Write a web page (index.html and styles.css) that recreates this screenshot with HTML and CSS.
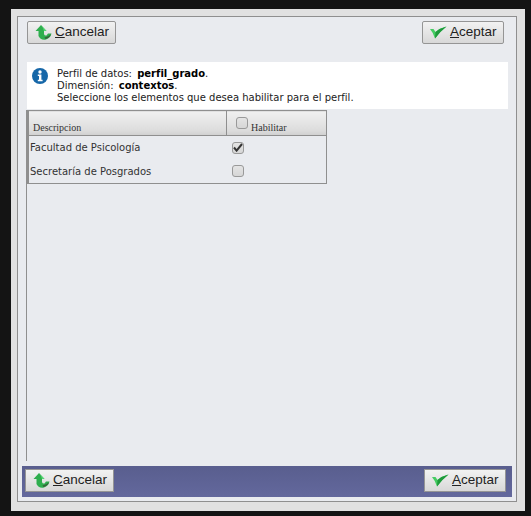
FILE: index.html
```html
<!DOCTYPE html>
<html lang="es">
<head>
    <meta charset="UTF-8">
    <title>Perfil de datos</title>
    <link rel="stylesheet" href="styles.css">
</head>
<body>
    <div class="outer">
        <div class="inner">
            <div class="toolbar">
                <button type="button" class="btn btn-cancel">
                    <svg class="ico" width="17" height="15" viewBox="0 0 17 15"><path d="M6 0 L11.5 6 L9 6 L9 9 Q9.5 11 11.5 10.5 L13 8.5 L16.5 8.5 Q15.5 13 11 14.5 Q5.5 15.5 3.5 11 L3.5 6 L0.5 6 Z" fill="#2fae4e"/><path d="M6 0 L11.5 6 L9 6 L8 3 Z" fill="#56d873"/><path d="M9.5 12.5 Q13.5 12 15.8 9.2 Q15 12.8 10.5 14 Z" fill="#37633c"/></svg>
                    <span><u>C</u>ancelar</span>
                </button>
                <button type="button" class="btn btn-ok">
                    <svg class="ico" width="17" height="13" viewBox="0 0 17 13"><path d="M0 3 L3.5 3 L5.5 6 Q10 2 16.5 0.5 Q10 5.5 5 12.5 Q3.5 7 0 3 Z" fill="#45cc62"/><path d="M5.5 6 Q10 2 16.5 0.5 Q10 5.5 5 12.5 Z" fill="#1f9a3c"/></svg>
                    <span><u>A</u>ceptar</span>
                </button>
            </div>
            <div class="info">
                <svg class="info-ico" width="16" height="16" viewBox="0 0 16 16"><circle cx="8" cy="8" r="8" fill="#1667a8"/><circle cx="8" cy="4" r="1.7" fill="#fff"/><path d="M5.8 6.6 H9.4 V11.8 H10.6 V13.2 H5.8 V11.8 H7 V8 H5.8 Z" fill="#fff"/></svg>
                <div class="info-text">
                    <div>Perfil de datos: <b>perfil_grado</b>.</div>
                    <div>Dimensión: <b>contextos</b>.</div>
                    <div>Seleccione los elementos que desea habilitar para el perfil.</div>
                </div>
            </div>
            <div class="content">
                <table class="grid">
                    <tr>
                        <th class="col-desc">Descripcion</th>
                        <th class="col-hab"><span class="check check-head"></span> Habilitar</th>
                    </tr>
                    <tr>
                        <td>Facultad de Psicología</td>
                        <td class="cell-check"><span class="check check-on">
                            <svg width="10" height="9" viewBox="0 0 10 9"><path d="M1 4.5 L3.6 7.6 L9 1" fill="none" stroke="#333" stroke-width="2"/></svg>
                        </span></td>
                    </tr>
                    <tr>
                        <td>Secretaría de Posgrados</td>
                        <td class="cell-check"><span class="check"></span></td>
                    </tr>
                </table>
            </div>
            <div class="footer">
                <button type="button" class="btn btn-cancel">
                    <svg class="ico" width="17" height="15" viewBox="0 0 17 15"><path d="M6 0 L11.5 6 L9 6 L9 9 Q9.5 11 11.5 10.5 L13 8.5 L16.5 8.5 Q15.5 13 11 14.5 Q5.5 15.5 3.5 11 L3.5 6 L0.5 6 Z" fill="#2fae4e"/><path d="M6 0 L11.5 6 L9 6 L8 3 Z" fill="#56d873"/><path d="M9.5 12.5 Q13.5 12 15.8 9.2 Q15 12.8 10.5 14 Z" fill="#37633c"/></svg>
                    <span><u>C</u>ancelar</span>
                </button>
                <button type="button" class="btn btn-ok">
                    <svg class="ico" width="17" height="13" viewBox="0 0 17 13"><path d="M0 3 L3.5 3 L5.5 6 Q10 2 16.5 0.5 Q10 5.5 5 12.5 Q3.5 7 0 3 Z" fill="#45cc62"/><path d="M5.5 6 Q10 2 16.5 0.5 Q10 5.5 5 12.5 Z" fill="#1f9a3c"/></svg>
                    <span><u>A</u>ceptar</span>
                </button>
            </div>
        </div>
    </div>
</body>
</html>
```

FILE: styles.css
```css
* {
    margin: 0;
    padding: 0;
    box-sizing: border-box;
}

html, body {
    height: 100%;
}

body {
    background-color: #141414;
    padding: 9px 6px 5px 11px;
    font-family: "Liberation Sans", Arial, sans-serif;
    overflow: hidden;
}

.outer {
    height: 100%;
    background-color: #e1e1e1;
    padding: 7px 8px 9px 6px;
}

.inner {
    height: 100%;
    display: flex;
    flex-direction: column;
    background-color: #e9ebef;
    border: 1px solid #8f8f8f;
    padding: 4px;
}

.toolbar {
    height: 41px;
    display: flex;
    justify-content: space-between;
    align-items: flex-start;
    padding: 0 8px 0 5px;
    flex: none;
}

.btn {
    flex: none;
    height: 23px;
    display: flex;
    align-items: center;
    gap: 3px;
    padding: 0 0 2px 7px;
    font-family: "Liberation Sans", Arial, sans-serif;
    font-size: 13.5px;
    color: #222;
    background: linear-gradient(#f2f2f2, #d8d8d8);
    border: 1px solid #959595;
    border-radius: 2px;
}

.btn-cancel {
    width: 89px;
}

.btn-ok {
    width: 82px;
}

.ico {
    flex: none;
    margin-top: 2px;
}

.info {
    flex: none;
    height: 47px;
    display: flex;
    gap: 9px;
    margin: 0 4px 0 5px;
    padding: 6px 0 0 5px;
    background-color: #fff;
    font-family: "DejaVu Sans", Verdana, sans-serif;
    font-size: 10px;
    line-height: 12px;
    color: #222;
}

.info-ico {
    flex: none;
}

.info-text b {
    margin-left: 2px;
    color: #000;
}

.content {
    flex: 1;
    margin: 1px 0 5px 4px;
    border-left: 1px solid #8f8f8f;
}

.grid {
    width: 300px;
    border-collapse: collapse;
    font-family: "DejaVu Sans", Verdana, sans-serif;
    font-size: 10px;
    color: #333;
}

.grid th {
    height: 25px;
    font-family: "Liberation Serif", "Times New Roman", serif;
    font-size: 10px;
    font-weight: normal;
    text-align: left;
    vertical-align: bottom;
    padding: 0 0 2px 4px;
    background: linear-gradient(#f0f0f0, #dcdcdc 80%, #cfcfcf);
    border: 1px solid #8f8f8f;
    border-left: 2px solid #8f8f8f;
}

.grid th.col-hab {
    border-left: 1px solid #8f8f8f;
    padding-left: 9px;
}

.col-desc {
    width: 198px;
}

.grid td {
    height: 24px;
    padding-left: 1px;
    border-left: 2px solid #8f8f8f;
}

.grid tr:last-child td {
    border-bottom: 1px solid #8f8f8f;
}

.grid td.cell-check {
    padding-left: 6px;
    border-left: none;
    border-right: 1px solid #8f8f8f;
}

.check {
    display: inline-flex;
    align-items: center;
    justify-content: center;
    width: 12px;
    height: 12px;
    vertical-align: middle;
    background: linear-gradient(#e4e4e4, #d6d6d6);
    border: 1px solid #999;
    border-radius: 3px;
}

.check-head {
    vertical-align: 2px;
    margin-right: 1px;
}

.footer {
    flex: none;
    height: 31px;
    display: flex;
    justify-content: space-between;
    padding: 3px 6px 0 3px;
    background: linear-gradient(#595e8e, #63689d);
}

.footer .btn {
    border-radius: 0;
}
```
